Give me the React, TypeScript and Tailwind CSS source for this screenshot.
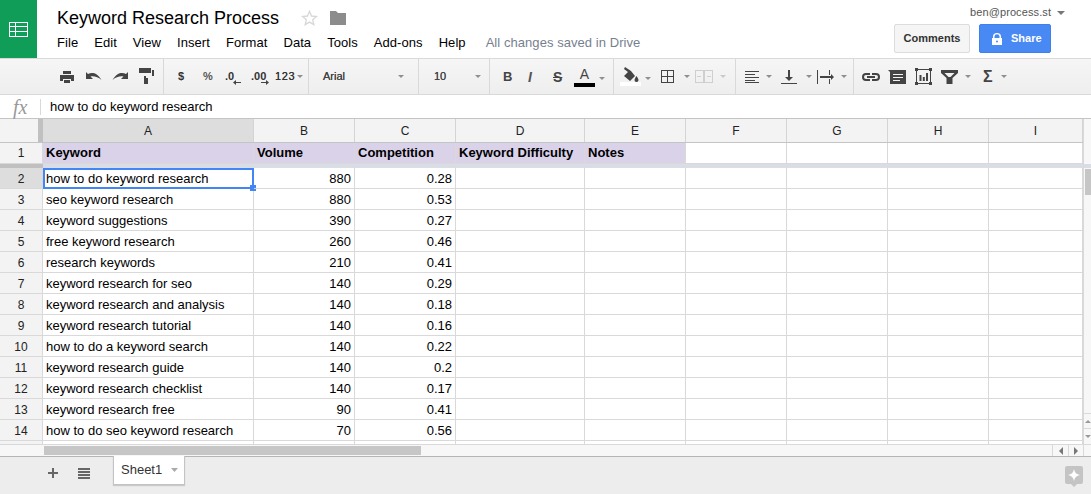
import React from 'react';

const menus = ['File', 'Edit', 'View', 'Insert', 'Format', 'Data', 'Tools', 'Add-ons', 'Help'];

const columns = [
  { name: 'A', w: 'w-[211px]' },
  { name: 'B', w: 'w-[101px]' },
  { name: 'C', w: 'w-[101px]' },
  { name: 'D', w: 'w-[129px]' },
  { name: 'E', w: 'w-[101px]' },
  { name: 'F', w: 'w-[101px]' },
  { name: 'G', w: 'w-[101px]' },
  { name: 'H', w: 'w-[101px]' },
  { name: 'I', w: 'w-[94px]' },
];

const headers = ['Keyword', 'Volume', 'Competition', 'Keyword Difficulty', 'Notes'];

const rows: [string, number, number][] = [
  ['how to do keyword research', 880, 0.28],
  ['seo keyword research', 880, 0.53],
  ['keyword suggestions', 390, 0.27],
  ['free keyword research', 260, 0.46],
  ['research keywords', 210, 0.41],
  ['keyword research for seo', 140, 0.29],
  ['keyword research and analysis', 140, 0.18],
  ['keyword research tutorial', 140, 0.16],
  ['how to do a keyword search', 140, 0.22],
  ['keyword research guide', 140, 0.2],
  ['keyword research checklist', 140, 0.17],
  ['keyword research free', 90, 0.41],
  ['how to do seo keyword research', 70, 0.56],
];

function Caret({ className = '' }: { className?: string }) {
  return (
    <svg width="6" height="3" viewBox="0 0 6 3" className={`shrink-0 ${className}`}>
      <path d="M0 0h6L3 3z" fill="#8f8f8f" />
    </svg>
  );
}

function Icon({ w, h, className = '', children }: { w: number; h: number; className?: string; children: React.ReactNode }) {
  return (
    <svg width={w} height={h} viewBox={`0 0 ${w} ${h}`} className={`shrink-0 ${className}`} fill="#444">
      {children}
    </svg>
  );
}

function Toolbar() {
  return (
    <div className="flex h-[37px] shrink-0 border-y border-[#d9d9d9] bg-gradient-to-b from-[#f6f6f6] to-[#eeeeee] text-[#333]">
      <div className="flex w-[164px] shrink-0 items-center border-r border-[#d9d9d9]">
        <Icon w={14} h={12} className="ml-[60px]">
          <path d="M3 0h8v3H3zM0 4h14v6h-3V8H3v2H0zM4 9h6v3H4z" />
        </Icon>
        <Icon w={16} h={9} className="ml-[12px]">
          <path d="M0 0l1.500 1.500.5.500C6 0 11 .5 15.500 8 12 5 8 3.800 4.500 4.500L7 7H0z" />
        </Icon>
        <Icon w={16} h={9} className="ml-[10px]">
          <path d="M16 0l-2 2C10 0 5 .5.500 8 4 5 8 3.800 11.500 4.500L9 7h7z" />
        </Icon>
        <Icon w={15} h={16} className="ml-[11px] -mt-[1px]">
          <path d="M0 0h12v5H0zM13 2h2v6H7v2h2v6H5v-8h8z" />
        </Icon>
      </div>
      <div className="flex w-[145px] shrink-0 items-center border-r border-[#d9d9d9] text-[11px] font-bold">
        <span className="ml-[14px] w-[8px]">$</span>
        <span className="ml-[17px] w-[10px] text-[#555]">%</span>
        <span className="relative ml-[12px] w-[16px]">
          .0
          <svg width="8" height="5" viewBox="0 0 8 5" className="absolute left-[8px] top-[12px]">
            <path d="M0 2.500L3 0v2h5v1H3v2z" fill="#444" />
          </svg>
        </span>
        <span className="relative ml-[10px] w-[19px]">
          .00
          <svg width="8" height="5" viewBox="0 0 8 5" className="absolute left-[10px] top-[12px]">
            <path d="M8 2.500L5 0v2H0v1h5v2z" fill="#444" />
          </svg>
        </span>
        <span className="ml-[5px] w-[22px] text-[11px] font-normal tracking-[0.6px] [text-shadow:0_0_0_#333]">123</span>
        <Caret />
      </div>
      <div className="flex w-[110px] shrink-0 items-center border-r border-[#d9d9d9] text-[11px] text-[#444]">
        <span className="ml-[14px] w-[75px] [text-shadow:0_0_0_#444]">Arial</span>
        <Caret />
      </div>
      <div className="flex w-[71px] shrink-0 items-center border-r border-[#d9d9d9] text-[11px] text-[#444]">
        <span className="ml-[15px] w-[41px] [text-shadow:0_0_0_#444]">10</span>
        <Caret />
      </div>
      <div className="flex w-[124px] shrink-0 items-center border-r border-[#d9d9d9]">
        <span className="ml-[13px] w-[9px] text-[13px] font-bold leading-none text-[#444]">B</span>
        <span className="ml-[16px] w-[10px] text-[14px] font-bold italic leading-none text-[#555]">I</span>
        <span className="ml-[15px] w-[12px] text-[14px] font-bold leading-none text-[#444] line-through">S</span>
        <span className="ml-[9px] flex w-[21px] flex-col items-center">
          <span className="text-[14px] leading-[15px] text-[#444]">A</span>
          <span className="mt-[1px] h-[4px] w-[21px] bg-black" />
        </span>
        <Caret className="ml-[4px] mt-[3px]" />
      </div>
      <div className="flex w-[122px] shrink-0 items-center border-r border-[#d9d9d9]">
        <span className="ml-[6px] flex w-[21px] flex-col items-center">
          <Icon w={16} h={15}>
            <path d="M2 0l6 4 4 5-5 5L1 9l4-4-4-3zM13.500 9c1 1.500 2 3 2 4a2 2 0 0 1-4 0c0-1 1-2.500 2-4z" />
          </Icon>
          <span className="h-[4px] w-[21px] bg-white" />
        </span>
        <Caret className="ml-[4px] mt-[3px]" />
        <Icon w={14} h={14} className="ml-[10px]">
          <path d="M0 0h13v13H0zM1 1v5h5V1zm6 0v5h5V1zM1 7v5h5V7zm6 0v5h5V7z" fillRule="evenodd" />
        </Icon>
        <Caret className="ml-[9px]" />
        <Icon w={18} h={13} className="ml-[5px]">
          <path fill="#cfcfcf" d="M0 0h18v13H0zM1 1v11h7V1zm9 0v11h7V1zM2 6h4v1H2zM12 6h4v1h-4z" fillRule="evenodd" />
        </Icon>
        <Caret className="ml-[7px] opacity-40" />
      </div>
      <div className="flex w-[118px] shrink-0 items-center border-r border-[#d9d9d9]">
        <Icon w={14} h={12} className="ml-[9px]">
          <path d="M0 0h14v1H0zM0 3h10v1H0zM0 6h14v1H0zM0 9h10v1H0zM0 11h14v1H0z" />
        </Icon>
        <Caret className="ml-[7px]" />
        <Icon w={16} h={14} className="ml-[9px]">
          <path d="M7 0h2v7h3l-4 4-4-4h3zM0 13h16v1H0z" />
        </Icon>
        <Caret className="ml-[9px]" />
        <Icon w={18} h={14} className="ml-[5px]">
          <path d="M0 0h1v14H0zM3 6h11V4l3 3-3 3V8H3zM12 0h1v5h-1zM12 9h1v5h-1z" />
        </Icon>
        <Caret className="ml-[6px]" />
      </div>
      <div className="flex items-center">
        <Icon w={18} h={8} className="ml-[8px]">
          <path d="M4 0h4v2H4a2 2 0 0 0 0 4h4v2H4a4 4 0 0 1 0-8zM10 0h4a4 4 0 0 1 0 8h-4V6h4a2 2 0 0 0 0-4h-4zM5 3h8v2H5z" />
        </Icon>
        <Icon w={18} h={14} className="ml-[8px]">
          <path d="M0 0h18v14H2V2zM5 4v1h10V4zm0 3v1h10V7zm0 3v1h7v-1z" fillRule="evenodd" />
        </Icon>
        <Icon w={17} h={17} className="ml-[9px]">
          <path d="M1 1h15v15H1zM2 2v13h13V2zM4.500 7h2v6h-2zM7.800 9h2v4h-2zM11 5h2v8h-2z" fillRule="evenodd" />
          <path d="M0 0h3v3H0zM14 0h3v3h-3zM0 14h3v3H0zM14 14h3v3h-3z" />
        </Icon>
        <Icon w={17} h={14} className="ml-[9px]">
          <path d="M0 0h17v3l-5.500 5v6h-6V8L0 3zM3.500 3l4 4h2l4-4z" fillRule="evenodd" />
        </Icon>
        <Caret className="ml-[7px]" />
        <span className="ml-[12px] w-[9px] text-[16px] font-bold leading-none text-[#444]">Σ</span>
        <Caret className="ml-[9px]" />
      </div>
    </div>
  );
}

function ColumnHeader() {
  return (
    <div className="flex h-[24px] shrink-0 border-b border-[#c4c4c4] bg-[#f3f3f3] text-[12px] text-[#222]">
      <div className="w-[38px] shrink-0" />
      <div className="w-[5px] shrink-0 bg-[#c0c0c0]" />
      {columns.map((c) => (
        <div
          key={c.name}
          className={`${c.w} flex shrink-0 items-center justify-center border-r border-[#d4d4d4] ${c.name === 'A' ? 'bg-[#dddddd]' : ''}`}
        >
          {c.name}
        </div>
      ))}
    </div>
  );
}

function HeaderRow() {
  return (
    <div className="flex h-[21px] shrink-0 text-[13px] font-bold text-black">
      <div className="flex w-[43px] shrink-0 items-center justify-center border-b border-r border-[#d9d9d9] bg-[#f3f3f3] text-[12px] font-normal text-[#222]">
        1
      </div>
      {columns.map((c, i) => (
        <div
          key={c.name}
          className={`${c.w} flex shrink-0 items-center overflow-hidden whitespace-nowrap border-b border-r border-[#d9d9d9] pl-[3px] ${i < 5 ? 'bg-[#d9d2e9]' : 'bg-white'}`}
        >
          {headers[i]}
        </div>
      ))}
    </div>
  );
}

function DataRow({ n, row }: { n: number; row: [string, number, number] }) {
  const selected = n === 2;
  return (
    <div className={`flex h-[21px] shrink-0 text-[13px] text-black ${selected ? 'relative z-10' : ''}`}>
      <div
        className={`flex w-[43px] shrink-0 items-center justify-center border-b border-r border-[#d9d9d9] pt-[1px] text-[12px] text-[#222] ${selected ? 'bg-[#dddddd]' : 'bg-[#f3f3f3]'}`}
      >
        {n}
      </div>
      {columns.map((c, i) => (
        <div
          key={c.name}
          className={`${c.w} relative flex shrink-0 items-center whitespace-nowrap border-b border-r border-[#d9d9d9] pt-[1px] ${i === 0 ? 'pl-[3px]' : 'justify-end pr-[3px]'}`}
        >
          {i < 3 ? row[i] : ''}
          {selected && i === 0 && (
            <>
              <div className="absolute bottom-[-1px] left-0 right-[-1px] top-0 border-2 border-[#4285f4]" />
              <div className="absolute bottom-[-3px] right-[-3px] h-[6px] w-[6px] bg-[#4285f4]" />
            </>
          )}
        </div>
      ))}
    </div>
  );
}

export default function App() {
  return (
    <div className="flex h-[494px] w-[1091px] flex-col overflow-hidden bg-white font-['Liberation_Sans',Arial,sans-serif]">
      <div className="flex h-[58px] shrink-0">
        <div className="flex w-[37px] shrink-0 items-center justify-center bg-[#0f9d58]">
          <svg width="19" height="15" viewBox="0 0 19 15">
            <path
              d="M0 0h19v15H0zM1 1v3h5V1zm6 0v3h11V1zM1 5v4h5V5zm6 0v4h11V5zM1 10v4h5v-4zm6 0v4h11v-4z"
              fill="#fff"
              fillRule="evenodd"
            />
          </svg>
        </div>
        <div className="ml-[20px] flex w-[800px] flex-col">
          <div className="mt-[7px] flex h-[22px] items-center">
            <span className="text-[18px] leading-[22px] text-black">Keyword Research Process</span>
            <svg width="17" height="16" viewBox="0 0 24 24" className="ml-[22px]">
              <path
                d="M12 2l3 7 7.500.7-5.700 5 1.700 7.300L12 18.200 5.500 22l1.700-7.300-5.700-5L9 9z"
                fill="none"
                stroke="#d8d8d8"
                strokeWidth="2"
              />
            </svg>
            <svg width="16" height="14" viewBox="0 0 16 14" className="ml-[12px]">
              <path d="M0 0h6l2 2h8v12H0z" fill="#8c8c8c" />
            </svg>
          </div>
          <div className="mt-[6px] flex items-center text-[13px] leading-[15px] tracking-[0.06px] text-black">
            {menus.map((m) => (
              <span key={m} className="mr-[16px]">
                {m}
              </span>
            ))}
            <span className="ml-[4px] tracking-[0.06px] text-[#777f8f]">All changes saved in Drive</span>
          </div>
        </div>
        <div className="ml-auto flex w-[197px] flex-col">
          <div className="mt-[5px] flex h-[15px] items-center pl-[76px] text-[11px] tracking-[0.1px] text-[#555]">
            <span>ben@process.st</span>
            <svg width="8" height="4" viewBox="0 0 8 4" className="ml-[6px]">
              <path d="M0 0h8L4 4z" fill="#777" />
            </svg>
          </div>
          <div className="mt-[4px] flex">
            <div className="flex h-[29px] w-[76px] items-center justify-center rounded-[2px] border border-[#dcdcdc] bg-[#f5f5f5] text-[11px] font-bold text-[#333]">
              Comments
            </div>
            <div className="ml-[9px] flex h-[29px] w-[72px] items-center rounded-[2px] border border-[#3d80ee] bg-[#4889f4] text-[11px] font-bold text-white">
              <svg width="10" height="12" viewBox="0 0 10 12" className="ml-[12px]">
                <path
                  d="M1 5V3.500a4 3.500 0 0 1 8 0V5h1v7H0V5zm1.500 0h5V3.500a2.500 2.200 0 0 0-5 0zM5 7.500a1 1 0 1 0 0 2 1 1 0 0 0 0-2z"
                  fill="#fff"
                  fillRule="evenodd"
                />
              </svg>
              <span className="ml-[9px]">Share</span>
            </div>
          </div>
        </div>
      </div>

      <Toolbar />

      <div className="flex h-[24px] shrink-0 items-center border-b border-[#c4c4c4] bg-white">
        <span className="ml-[13px] w-[27px] font-['Liberation_Serif',serif] text-[20px] italic leading-none text-[#999]">fx</span>
        <span className="h-[16px] w-px bg-[#d9d9d9]" />
        <span className="ml-[9px] text-[13px] text-black">how to do keyword research</span>
      </div>

      <div className="flex h-[326px] shrink-0">
        <div className="flex w-[1083px] shrink-0 flex-col overflow-hidden">
          <ColumnHeader />
          <HeaderRow />
          <div className="flex h-[4px] shrink-0">
            <div className="w-[43px] bg-[#c0c0c0]" />
            <div className="flex-1 bg-[#d9dde6]" />
          </div>
          {rows.map((r, i) => (
            <DataRow key={r[0]} n={i + 2} row={r} />
          ))}
          <div className="flex h-[4px] shrink-0 border-b border-[#d9d9d9]">
            <div className="w-[43px] shrink-0 border-r border-[#d9d9d9] bg-[#f3f3f3]" />
            {columns.map((c) => (
              <div key={c.name} className={`${c.w} shrink-0 border-r border-[#d9d9d9]`} />
            ))}
          </div>
        </div>
        <div className="flex w-[8px] flex-col border-l border-[#d9d9d9] bg-[#f7f7f7]">
          <div className="h-[45px] shrink-0" />
          <div className="h-[4px] shrink-0 bg-[#d9dde6]" />
          <div className="ml-[1px] mt-[1px] h-[26px] shrink-0 bg-[#c6c6c6]" />
          <div className="mt-auto flex h-[16px] shrink-0 items-center justify-center border-y border-[#d9d9d9]">
            <div className="h-0 w-0 border-x-[3px] border-b-[3px] border-x-transparent border-b-[#999]" />
          </div>
          <div className="flex h-[16px] shrink-0 items-center justify-center border-b border-[#d9d9d9]">
            <div className="h-0 w-0 border-x-[3px] border-t-[3px] border-x-transparent border-t-[#999]" />
          </div>
        </div>
      </div>

      <div className="flex h-[12px] shrink-0 border-b border-[#b5b5b5] bg-[#f7f7f7]">
        <div className="w-[44px] shrink-0" />
        <div className="mt-[1px] h-[9px] w-[377px] bg-[#c6c6c6]" />
        <div className="ml-auto flex">
          <div className="flex w-[16px] items-center justify-center border-l border-[#d9d9d9]">
            <div className="h-0 w-0 border-y-[4px] border-r-[4px] border-y-transparent border-r-[#777]" />
          </div>
          <div className="flex w-[16px] items-center justify-center border-x border-[#d9d9d9]">
            <div className="h-0 w-0 border-y-[4px] border-l-[4px] border-y-transparent border-l-[#777]" />
          </div>
          <div className="w-[7px]" />
        </div>
      </div>

      <div className="flex h-[37px] shrink-0 items-start bg-[#ededed]">
        <svg width="10" height="10" viewBox="0 0 10 10" className="ml-[48px] mt-[11px]">
          <path d="M4 0h2v4h4v2H6v4H4V6H0V4h4z" fill="#666" />
        </svg>
        <svg width="12" height="11" viewBox="0 0 12 11" className="ml-[20px] mt-[11px]">
          <path d="M0 0h12v2H0zM0 3h12v2H0zM0 6h12v2H0zM0 9h12v2H0z" fill="#666" />
        </svg>
        <div className="-mt-px ml-[23px] flex h-[29px] w-[72px] items-center border border-t-0 border-[#c4c4c4] bg-white pb-[1px] pl-[7px] text-[13px] text-[#333] shadow-[0_1px_1px_rgba(0,0,0,0.15)]">
          <span>Sheet1</span>
          <svg width="7" height="4" viewBox="0 0 7 4" className="ml-[9px]">
            <path d="M0 0h7L3.500 4z" fill="#aaa" />
          </svg>
        </div>
        <svg width="18" height="21" viewBox="0 0 18 21" className="ml-auto mr-[8px] mt-[9px]">
          <path
            d="M2 0h14a2 2 0 0 1 2 2v14a2 2 0 0 1-2 2h-4l-3 3-3-3H2a2 2 0 0 1-2-2V2a2 2 0 0 1 2-2z"
            fill="#c4c4c4"
          />
          <path d="M9 3c.5 3.500 2.500 5.500 6 6-3.500.5-5.500 2.500-6 6-.5-3.500-2.500-5.500-6-6 3.500-.5 5.500-2.500 6-6z" fill="#fff" />
        </svg>
      </div>
    </div>
  );
}
